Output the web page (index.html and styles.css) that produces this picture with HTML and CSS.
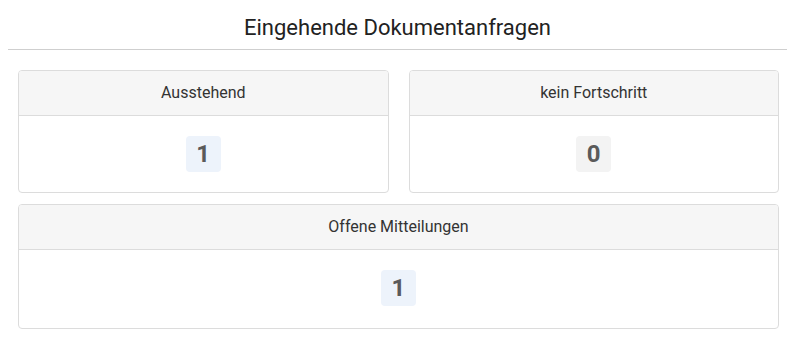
FILE: index.html
```html
<!DOCTYPE html>
<html lang="de">

<head>
    <meta charset="UTF-8">
    <meta name="viewport" content="width=device-width, initial-scale=1.0">
    <title>Eingehende Dokumentanfragen</title>
    <link rel="stylesheet" href="styles.css">
</head>

<body>
    <h1 class="page-title">Eingehende Dokumentanfragen</h1>
    <section class="stats">
        <div class="card">
            <div class="card-header">Ausstehend</div>
            <div class="card-body">
                <span class="count count-blue">1</span>
            </div>
        </div>
        <div class="card">
            <div class="card-header">kein Fortschritt</div>
            <div class="card-body">
                <span class="count count-grey">0</span>
            </div>
        </div>
        <div class="card card-wide">
            <div class="card-header">Offene Mitteilungen</div>
            <div class="card-body">
                <span class="count count-blue">1</span>
            </div>
        </div>
    </section>
</body>

</html>
```

FILE: styles.css
```css
body {
    margin: 8px;
    background-color: white;
    color: #222;
    font-family: Roboto, "Liberation Sans", sans-serif;
}

.page-title {
    margin: 0;
    padding: 7px 0 8px;
    font-size: 22px;
    font-weight: normal;
    line-height: 26px;
    text-align: center;
    border-bottom: 1px solid #cfcfcf;
}

.stats {
    display: grid;
    grid-template-columns: 1fr 1fr;
    gap: 11px 20px;
    padding: 20px 8px 0 10px;
}

.card {
    border: 1px solid #dcdcdc;
    border-radius: 4px;
    overflow: hidden;
}

.card-wide {
    grid-column: 1 / -1;
}

.card-wide .card-body {
    padding-bottom: 22px;
}

.card-header {
    background-color: #f6f6f6;
    border-bottom: 1px solid #dcdcdc;
    height: 44px;
    line-height: 44px;
    text-align: center;
    font-size: 16px;
    color: #333;
}

.card-body {
    display: flex;
    justify-content: center;
    padding: 20px 0;
}

.count {
    display: inline-block;
    min-width: 35px;
    height: 36px;
    line-height: 36px;
    border-radius: 4px;
    text-align: center;
    font-size: 24px;
    font-weight: bold;
    color: #5a5a5a;
}

.count-blue {
    background-color: #edf3fb;
}

.count-grey {
    background-color: #f3f3f3;
}
```
